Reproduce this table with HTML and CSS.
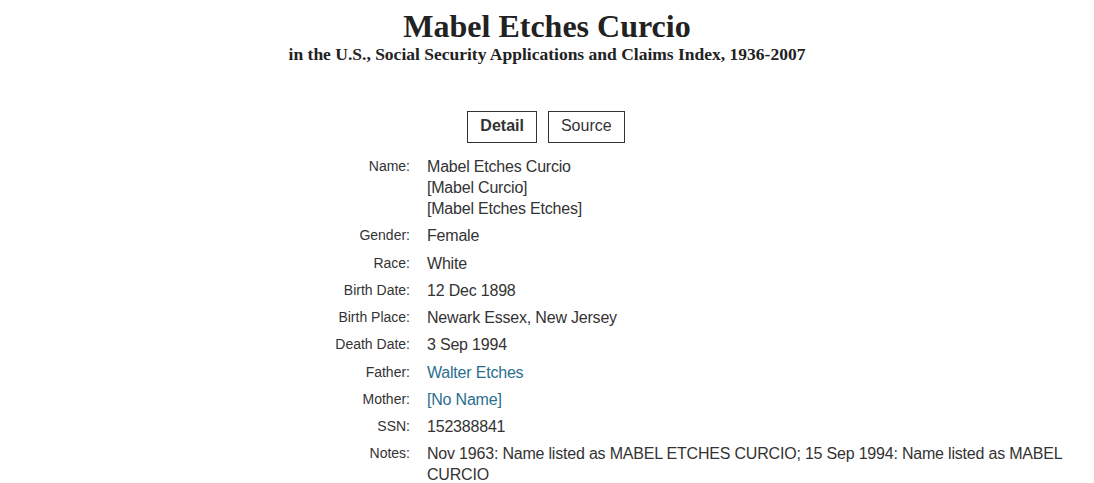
FILE: index.html
```html
<!DOCTYPE html>
<html>
<head>
<meta charset="utf-8">
<link rel="stylesheet" href="styles.css">
</head>
<body>
<header class="head">
  <h1 class="title">Mabel Etches Curcio</h1>
  <p class="subtitle">in the U.S., Social Security Applications and Claims Index, 1936-2007</p>
</header>
<nav class="tabs">
  <span class="tab tab-active">Detail</span>
  <span class="tab">Source</span>
</nav>
<dl class="facts">
  <dt>Name:</dt>
  <dd>Mabel Etches Curcio<br>[Mabel Curcio]<br>[Mabel Etches Etches]</dd>
  <dt>Gender:</dt>
  <dd>Female</dd>
  <dt>Race:</dt>
  <dd>White</dd>
  <dt>Birth Date:</dt>
  <dd>12 Dec 1898</dd>
  <dt>Birth Place:</dt>
  <dd>Newark Essex, New Jersey</dd>
  <dt>Death Date:</dt>
  <dd>3 Sep 1994</dd>
  <dt>Father:</dt>
  <dd><a class="link" href="#">Walter Etches</a></dd>
  <dt>Mother:</dt>
  <dd><a class="link" href="#">[No Name]</a></dd>
  <dt>SSN:</dt>
  <dd>152388841</dd>
  <dt>Notes:</dt>
  <dd>Nov 1963: Name listed as MABEL ETCHES CURCIO; 15 Sep 1994: Name listed as MABEL CURCIO</dd>
</dl>
</body>
</html>
```
FILE: styles.css
```css
html, body {
  margin: 0;
  padding: 0;
  background: #fff;
  color: #333;
}
body {
  font-family: "Liberation Sans", Arial, sans-serif;
}
.head {
  text-align: center;
  padding-top: 8px;
}
.title {
  margin: 0;
  font-family: "Liberation Serif", "Times New Roman", serif;
  font-weight: bold;
  font-size: 32px;
  line-height: 36px;
  color: #222;
}
.subtitle {
  margin: 0;
  font-family: "Liberation Serif", "Times New Roman", serif;
  font-weight: bold;
  font-size: 17.5px;
  line-height: 20px;
  color: #222;
}
.tabs {
  display: flex;
  justify-content: center;
  gap: 11px;
  margin-top: 47px;
  padding-right: 2px;
}
.tab {
  display: inline-block;
  height: 30px;
  line-height: 28px;
  padding: 0 12px;
  border: 1px solid #333;
  font-size: 16px;
  color: #333;
}
.tab-active {
  font-weight: bold;
}
.facts {
  display: grid;
  grid-template-columns: 110px 650px;
  column-gap: 17px;
  row-gap: 6.25px;
  align-items: start;
  margin: 13px 0 0 300px;
}
.facts dt {
  text-align: right;
  font-size: 14px;
  line-height: 21px;
  color: #333;
}
.facts dd {
  margin: 0;
  font-size: 16px;
  line-height: 21px;
  letter-spacing: -0.2px;
  color: #333;
}
.link {
  color: #2a6f8e;
  text-decoration: none;
}
```
